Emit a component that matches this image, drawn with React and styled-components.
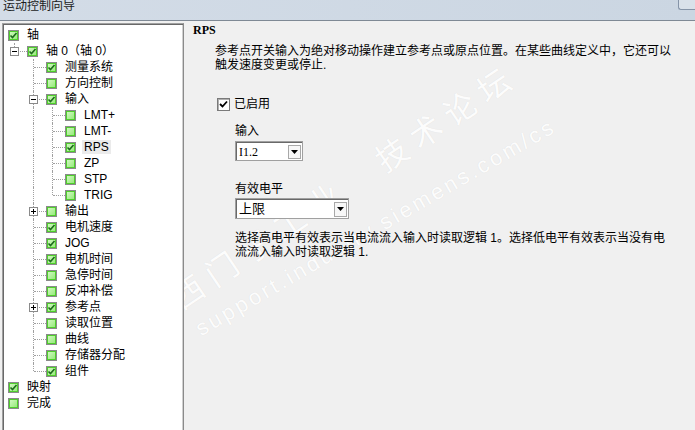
import React from 'react';
import styled, {createGlobalStyle} from 'styled-components';

const GlobalStyle = createGlobalStyle`
    html, body {
        margin: 0;
        padding: 0;
        background: #f0f0f0;
        overflow: hidden;
    }
    body {
        font-family: "Liberation Sans", "Noto Sans CJK SC", sans-serif;
        font-size: 12px;
        color: #000;
    }
`;

const Window = styled.div`
    width: 695px;
    height: 430px;
    display: flex;
    flex-direction: column;
    overflow: hidden;
`;

const TitleBar = styled.div`
    flex: none;
    height: 20px;
    display: flex;
    justify-content: space-between;
    align-items: flex-start;
    background: linear-gradient(to right, #d3dce7, #cbd6e2);
    border-bottom: 1px solid #7f8995;
`;

const Title = styled.div`
    padding-left: 3px;
    font-size: 12px;
    line-height: 13px;
    color: #1c1c1c;
`;

const CloseEdge = styled.div`
    width: 17px;
    height: 10px;
    box-sizing: border-box;
    border-left: 1px solid #8594a8;
    border-bottom: 1px solid #8594a8;
    border-bottom-left-radius: 3px;
    background: #d9e1ea;
`;

const Body = styled.div`
    flex: 1;
    min-height: 0;
    display: flex;
    padding-left: 2px;
`;

// ---- tree ----

const TreePanel = styled.div`
    flex: none;
    width: 182px;
    margin-top: 2px;
    box-sizing: border-box;
    background: #fff;
    border-top: 1px solid #a0a0a0;
    border-left: 1px solid #a0a0a0;
    border-right: 1px solid #8a8a8a;
    box-shadow: inset 1px 1px 0 #696969, inset -1px 0 0 #d0d0d0;
    padding: 3px 0 0 5px;
`;

const Row = styled.div`
    display: flex;
    align-items: flex-start;
    height: 16px;
`;

const Guide = styled.span`
    position: relative;
    flex: none;
    width: 19px;
    height: 16px;
    &::before {
        content: '';
        position: absolute;
        left: 6px;
        top: 0;
        height: ${p => (p.$kind === 'elbow' ? '8px' : '16px')};
        border-left: 1px dotted #a0a0a0;
        display: ${p => (p.$kind === 'none' ? 'none' : 'block')};
    }
    &::after {
        content: '';
        position: absolute;
        left: 7px;
        top: 8px;
        width: 12px;
        border-top: 1px dotted #a0a0a0;
        display: ${p => (p.$kind === 'tee' || p.$kind === 'elbow' ? 'block' : 'none')};
    }
`;

const ExpBox = styled.span`
    position: absolute;
    left: 2px;
    top: 4px;
    width: 9px;
    height: 9px;
    z-index: 1;
    line-height: 0;
`;

const GreenBox = styled.span`
    flex: none;
    width: 11px;
    height: 11px;
    margin-top: 3px;
    box-sizing: border-box;
    border: 1px solid #8a8a8a;
    background: linear-gradient(135deg, #d8fbc9, #8fe872);
    box-shadow: inset 0 0 0 1px #4fcf2c;
    line-height: 0;
`;

const Label = styled.span`
    margin-left: 6px;
    margin-top: 1px;
    padding: 0 2px;
    height: 14px;
    line-height: 14px;
    white-space: nowrap;
    background: ${p => (p.$selected ? '#ebebeb' : 'transparent')};
`;

const Expander = ({open}) => (
    <ExpBox>
        <svg width="9" height="9">
            <rect x="0.5" y="0.5" width="8" height="8" fill="#fff" stroke="#8a8a8a" />
            <line x1="2" y1="4.5" x2="7" y2="4.5" stroke="#000" />
            {!open && <line x1="4.5" y1="2" x2="4.5" y2="7" stroke="#000" />}
        </svg>
    </ExpBox>
);

const GreenCheck = ({checked}) => (
    <GreenBox>
        {checked && (
            <svg width="9" height="9">
                <polyline points="1.5,4.5 3.5,6.5 7.5,2" fill="none" stroke="#1d6a1d" strokeWidth="1.6" />
            </svg>
        )}
    </GreenBox>
);

const tree = [
    {label: '轴', checked: true, children: [
        {label: '轴 0（轴 0）', checked: true, exp: 'open', children: [
            {label: '测量系统', checked: true},
            {label: '方向控制'},
            {label: '输入', checked: true, exp: 'open', children: [
                {label: 'LMT+'},
                {label: 'LMT-'},
                {label: 'RPS', checked: true, selected: true},
                {label: 'ZP'},
                {label: 'STP'},
                {label: 'TRIG'},
            ]},
            {label: '输出', exp: 'closed'},
            {label: '电机速度', checked: true},
            {label: 'JOG', checked: true},
            {label: '电机时间', checked: true},
            {label: '急停时间'},
            {label: '反冲补偿'},
            {label: '参考点', checked: true, exp: 'closed'},
            {label: '读取位置'},
            {label: '曲线'},
            {label: '存储器分配'},
            {label: '组件', checked: true},
        ]},
    ]},
    {label: '映射', checked: true},
    {label: '完成'},
];

const renderNodes = (nodes, level, guides) =>
    nodes.flatMap((n, i) => {
        const last = i === nodes.length - 1;
        const cells = level === 0 ? [] : [...guides, last ? 'elbow' : 'tee'];
        const row = (
            <Row key={n.label}>
                {cells.map((c, k) => (
                    <Guide key={k} $kind={c}>
                        {k === cells.length - 1 && n.exp && <Expander open={n.exp === 'open'} />}
                    </Guide>
                ))}
                <GreenCheck checked={n.checked} />
                <Label $selected={n.selected}>{n.label}</Label>
            </Row>
        );
        const kids = n.children && n.exp !== 'closed'
            ? renderNodes(n.children, level + 1, level === 0 ? [] : [...guides, last ? 'none' : 'full'])
            : [];
        return [row, ...kids];
    });

// ---- page ----

const Content = styled.div`
    flex: 1;
    position: relative;
    padding: 2px 0 0 9px;
    display: flex;
    flex-direction: column;
    align-items: flex-start;
    overflow: hidden;
`;

const Heading = styled.div`
    font-family: "Liberation Serif", serif;
    font-weight: bold;
    font-size: 12px;
    line-height: 14px;
`;

const Text = styled.div`
    margin-top: ${p => p.$top}px;
    margin-left: ${p => p.$left}px;
    line-height: 14px;
    white-space: nowrap;
    position: relative;
    z-index: 1;
`;

const EnableRow = styled.label`
    margin-top: 25px;
    margin-left: 24px;
    display: flex;
    align-items: center;
    gap: 4px;
    height: 14px;
    line-height: 14px;
`;

const ClassicBox = styled.span`
    width: 13px;
    height: 13px;
    box-sizing: border-box;
    background: #fff;
    border: 1px solid #7a7a7a;
    box-shadow: inset 1px 1px 0 #b0b0b0;
    line-height: 0;
`;

const Fields = styled.div`
    margin-left: 42px;
    display: flex;
    flex-direction: column;
    align-items: flex-start;
`;

const FieldLabel = styled.div`
    margin-top: ${p => p.$top}px;
    line-height: 14px;
`;

const Select = styled.div`
    margin-top: ${p => p.$top}px;
    width: ${p => p.$w}px;
    height: ${p => p.$h}px;
    box-sizing: border-box;
    background: #fff;
    border: 1px solid #a0a0a0;
    box-shadow: inset 1px 1px 0 #696969;
    display: flex;
    align-items: center;
    justify-content: space-between;
    padding: 1px 1px 0 3px;
    position: relative;
    z-index: 1;
`;

const SelectValue = styled.span`
    font-family: ${p => (p.$serif ? '"Liberation Serif", serif' : '"Liberation Sans", "Noto Sans CJK SC", sans-serif')};
    font-size: ${p => p.$size}px;
    line-height: 14px;
`;

const DropButton = styled.span`
    width: 13px;
    height: ${p => p.$h}px;
    box-sizing: border-box;
    background: #f7f7f7;
    border: 1px solid #a8a8a8;
    display: flex;
    align-items: center;
    justify-content: center;
`;

const Watermark = styled.div`
    position: absolute;
    left: ${p => p.$x}px;
    top: ${p => p.$y}px;
    transform: rotate(${p => p.$deg}deg);
    transform-origin: 0 100%;
    font-size: ${p => p.$size}px;
    line-height: 1;
    letter-spacing: ${p => p.$ls}px;
    white-space: nowrap;
    color: rgba(255, 255, 255, 0.95);
    text-shadow: 0 0 1px rgba(0, 0, 0, 0.09);
    pointer-events: none;
`;

const Arrow = () => (
    <svg width="7" height="4">
        <polygon points="0,0 7,0 3.5,4" fill="#000" />
    </svg>
);

export default () => {
    return (
        <Window>
            <GlobalStyle />
            <TitleBar>
                <Title>运动控制向导</Title>
                <CloseEdge />
            </TitleBar>
            <Body>
                <TreePanel>{renderNodes(tree, 0, [])}</TreePanel>
                <Content>
                    <Watermark $x={0} $y={262} $deg={-34} $size={32} $ls={9}>西门子工业　技术论坛</Watermark>
                    <Watermark $x={19} $y={297} $deg={-30} $size={22} $ls={3}>support.industry.siemens.com/cs</Watermark>
                    <Heading>RPS</Heading>
                    <Text $top={7} $left={22}>
                        参考点开关输入为绝对移动操作建立参考点或原点位置。在某些曲线定义中，它还可以<br />
                        触发速度变更或停止.
                    </Text>
                    <EnableRow>
                        <ClassicBox>
                            <svg width="11" height="11">
                                <polyline points="2,5 4.5,7.5 9,2.5" fill="none" stroke="#000" strokeWidth="1.8" />
                            </svg>
                        </ClassicBox>
                        已启用
                    </EnableRow>
                    <Fields>
                        <FieldLabel $top={13}>输入</FieldLabel>
                        <Select $top={3} $w={68} $h={20}>
                            <SelectValue $serif $size={12}>I1.2</SelectValue>
                            <DropButton $h={14}><Arrow /></DropButton>
                        </Select>
                        <FieldLabel $top={21}>有效电平</FieldLabel>
                        <Select $top={2} $w={114} $h={21}>
                            <SelectValue $size={13}>上限</SelectValue>
                            <DropButton $h={15}><Arrow /></DropButton>
                        </Select>
                        <Text $top={12} $left={0}>
                            选择高电平有效表示当电流流入输入时读取逻辑 1。选择低电平有效表示当没有电<br />
                            流流入输入时读取逻辑 1.
                        </Text>
                    </Fields>
                </Content>
            </Body>
        </Window>
    );
};
